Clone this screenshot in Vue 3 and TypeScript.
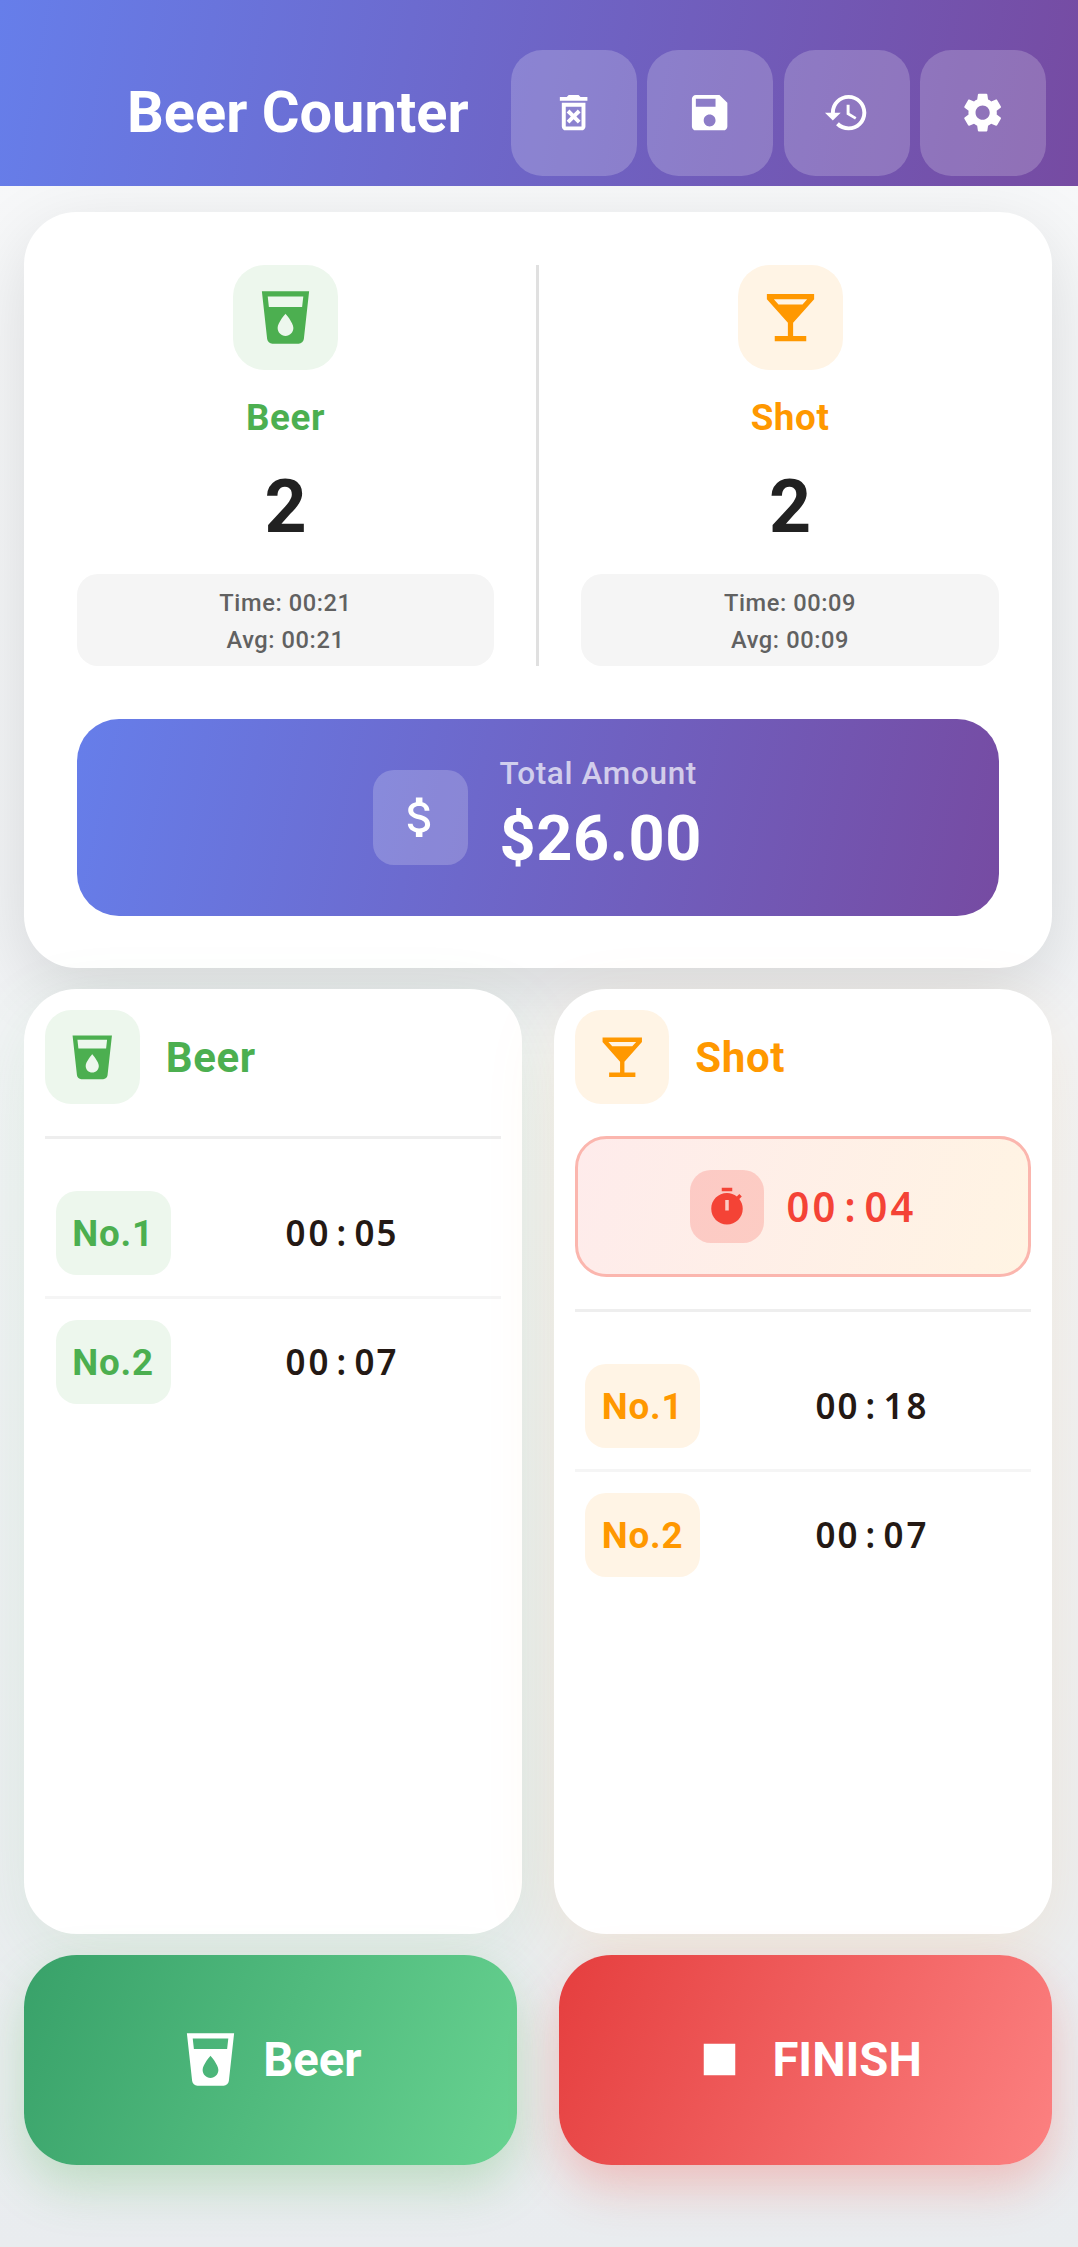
<script setup lang="ts">
interface Entry {
  no: string
  time: string
}
interface Counter {
  kind: 'beer' | 'shot'
  name: string
  count: number
  total: string
  avg: string
  running: string | null
  entries: Entry[]
}

const icons = {
  beer: 'M3 2l2.01 18.23C5.13 21.23 5.97 22 7 22h10c1.03 0 1.87-.77 1.99-1.77L21 2H3zm9 17c-1.66 0-3-1.34-3-3 0-2 3-5.4 3-5.4s3 3.4 3 5.4c0 1.66-1.34 3-3 3zm6.33-11H5.67l-.44-4h13.55l-.45 4z',
  shot: 'M21 5V3H3v2l8 9v5H6v2h12v-2h-5v-5l8-9zM7.43 7L5.66 5h12.69l-1.78 2H7.43z',
  clear: 'M14.12 10.47L12 12.59l-2.13-2.12-1.41 1.41L10.59 14l-2.12 2.12 1.41 1.41L12 15.41l2.12 2.12 1.41-1.41L13.41 14l2.12-2.12zM15.5 4l-1-1h-5l-1 1H5v2h14V4h-3.5zM6 19c0 1.1.9 2 2 2h8c1.1 0 2-.9 2-2V7H6v12zM8 9h8v10H8V9z',
  save: 'M17 3H5c-1.11 0-2 .9-2 2v14c0 1.1.89 2 2 2h14c1.1 0 2-.9 2-2V7l-4-4zm-5 16c-1.66 0-3-1.34-3-3s1.34-3 3-3 3 1.34 3 3-1.34 3-3 3zm3-10H5V5h10v4z',
  history: 'M13 3c-4.97 0-9 4.03-9 9H1l3.89 3.89.07.14L9 12H6c0-3.87 3.13-7 7-7s7 3.13 7 7-3.13 7-7 7c-1.93 0-3.68-.79-4.94-2.06l-1.42 1.42C8.27 19.99 10.51 21 13 21c4.97 0 9-4.03 9-9s-4.03-9-9-9zm-1 5v5l4.28 2.54.72-1.21-3.5-2.08V8H12z',
  settings: 'M19.14 12.94c.04-.3.06-.61.06-.94 0-.32-.02-.64-.07-.94l2.03-1.58c.18-.14.23-.41.12-.61l-1.92-3.32c-.12-.22-.37-.29-.59-.22l-2.39.96c-.5-.38-1.03-.7-1.62-.94l-.36-2.54c-.04-.24-.24-.41-.48-.41h-3.84c-.24 0-.43.17-.47.41l-.36 2.54c-.59.24-1.13.57-1.62.94l-2.39-.96c-.22-.08-.47 0-.59.22L2.74 8.87c-.12.21-.08.47.12.61l2.03 1.58c-.05.3-.09.63-.09.94s.02.64.07.94l-2.03 1.58c-.18.14-.23.41-.12.61l1.92 3.32c.12.22.37.29.59.22l2.39-.96c.5.38 1.03.7 1.62.94l.36 2.54c.05.24.24.41.48.41h3.84c.24 0 .44-.17.47-.41l.36-2.54c.59-.24 1.13-.56 1.62-.94l2.39.96c.22.08.47 0 .59-.22l1.92-3.32c.12-.22.07-.47-.12-.61l-2.01-1.58zM12 15.6c-1.98 0-3.6-1.62-3.6-3.6s1.62-3.6 3.6-3.6 3.6 1.62 3.6 3.6-1.62 3.6-3.6 3.6z',
  money: 'M11.8 10.9c-2.27-.59-3-1.2-3-2.15 0-1.09 1.01-1.85 2.7-1.85 1.78 0 2.44.85 2.5 2.1h2.21c-.07-1.72-1.12-3.3-3.21-3.81V3h-3v2.16c-1.94.42-3.5 1.68-3.5 3.61 0 2.31 1.91 3.46 4.7 4.13 2.5.6 3 1.48 3 2.41 0 .69-.49 1.79-2.7 1.79-2.06 0-2.87-.92-2.98-2.1h-2.2c.12 2.19 1.76 3.42 3.68 3.83V21h3v-2.15c1.95-.37 3.5-1.5 3.5-3.55 0-2.84-2.43-3.81-4.7-4.4z',
  timer: 'M15 1H9v2h6V1zm-4 13h2V8h-2v6zm8.03-6.61l1.42-1.42c-.43-.51-.9-.99-1.41-1.41l-1.42 1.42C16.07 4.74 14.12 4 12 4c-4.97 0-9 4.03-9 9s4.02 9 9 9 9-4.03 9-9c0-2.12-.74-4.07-1.97-5.61z',
  stop: 'M6 6h12v12H6z',
}

const actions = [
  { label: 'Clear', path: icons.clear },
  { label: 'Save', path: icons.save },
  { label: 'History', path: icons.history },
  { label: 'Settings', path: icons.settings },
]

const counters: Counter[] = [
  {
    kind: 'beer', name: 'Beer', count: 2, total: '00:21', avg: '00:21', running: null,
    entries: [{ no: 'No.1', time: '00:05' }, { no: 'No.2', time: '00:07' }],
  },
  {
    kind: 'shot', name: 'Shot', count: 2, total: '00:09', avg: '00:09', running: '00:04',
    entries: [{ no: 'No.1', time: '00:18' }, { no: 'No.2', time: '00:07' }],
  },
]
</script>

<template>
  <div class="app">
    <header class="bar">
      <h1 class="title">Beer Counter</h1>
      <nav class="actions">
        <button v-for="a in actions" :key="a.label" class="action" :aria-label="a.label">
          <svg viewBox="0 0 24 24"><path :d="a.path" fill-rule="evenodd" /></svg>
        </button>
      </nav>
    </header>

    <main class="body">
      <section class="summary">
        <div class="stats">
          <template v-for="(c, i) in counters" :key="c.kind">
            <div v-if="i > 0" class="vline"></div>
            <div class="stat" :class="c.kind">
              <div class="tile tile-lg">
                <svg viewBox="0 0 24 24"><path :d="icons[c.kind]" fill-rule="evenodd" /></svg>
              </div>
              <div class="stat-name">{{ c.name }}</div>
              <div class="stat-count">{{ c.count }}</div>
              <div class="stat-times">
                <div>Time: {{ c.total }}</div>
                <div>Avg: {{ c.avg }}</div>
              </div>
            </div>
          </template>
        </div>
        <div class="total">
          <div class="total-icon">
            <svg viewBox="0 0 24 24"><path :d="icons.money" /></svg>
          </div>
          <div>
            <div class="total-label">Total Amount</div>
            <div class="total-value">$26.00</div>
          </div>
        </div>
      </section>

      <section class="columns">
        <div v-for="c in counters" :key="c.kind" class="column" :class="c.kind">
          <div class="column-head">
            <div class="tile tile-md">
              <svg viewBox="0 0 24 24"><path :d="icons[c.kind]" fill-rule="evenodd" /></svg>
            </div>
            <div class="column-name">{{ c.name }}</div>
          </div>
          <div v-if="c.running" class="running">
            <div class="running-icon">
              <svg viewBox="0 0 24 24"><path :d="icons.timer" fill-rule="evenodd" /></svg>
            </div>
            <div class="clock clock-lg">
              <span v-for="(ch, k) in c.running" :key="k">{{ ch }}</span>
            </div>
          </div>
          <div class="hline"></div>
          <div class="entries">
            <div v-for="e in c.entries" :key="e.no" class="entry">
              <div class="chip">{{ e.no }}</div>
              <div class="clock">
                <span v-for="(ch, k) in e.time" :key="k">{{ ch }}</span>
              </div>
            </div>
          </div>
        </div>
      </section>

      <section class="buttons">
        <button class="big start">
          <svg viewBox="0 0 24 24"><path :d="icons.beer" fill-rule="evenodd" /></svg>
          <span>Beer</span>
        </button>
        <button class="big finish">
          <svg viewBox="0 0 24 24"><path :d="icons.stop" /></svg>
          <span>FINISH</span>
        </button>
      </section>
    </main>
  </div>
</template>

<style>
body {
  margin: 0;
}
</style>

<style scoped>
.app,
.app * {
  box-sizing: border-box;
}
.app {
  width: 1078px;
  height: 2247px;
  overflow: hidden;
  display: flex;
  flex-direction: column;
  font-family: Roboto, 'Liberation Sans', sans-serif;
  background: linear-gradient(180deg, #f8f9fa, #e9ecef);
}
button {
  border: 0;
  padding: 0;
  font: inherit;
  color: #fff;
}
svg {
  display: block;
  fill: currentColor;
}
.bar {
  position: relative;
  z-index: 1;
  height: 186px;
  flex: none;
  padding: 49.5px 32px 0 127px;
  display: flex;
  align-items: flex-start;
  justify-content: space-between;
  background: linear-gradient(99.8deg, #667eea, #764ba2);
}
.title {
  margin: 0;
  font-size: 57.75px;
  line-height: 124px;
  font-weight: 700;
  letter-spacing: 0;
  color: #fff;
  white-space: nowrap;
}
.actions {
  display: flex;
  gap: 10.5px;
}
.action {
  width: 126px;
  height: 126px;
  border-radius: 31.5px;
  background: rgba(255, 255, 255, 0.2);
  display: flex;
  align-items: center;
  justify-content: center;
}
.action svg {
  width: 47.25px;
  height: 47.25px;
}
.body {
  width: 1027.5px;
  margin: 26.2px 0 0 24px;
  display: flex;
  flex-direction: column;
  gap: 21px;
}
.summary {
  height: 755.5px;
  padding: 52.5px;
  border-radius: 52.5px;
  background: #fff;
  box-shadow: 0 21px 73px rgba(0, 0, 0, 0.12);
}
.stats {
  display: flex;
  height: 401.6px;
}
.vline {
  width: 2.625px;
  margin: 0 42px;
  background: #e0e0e0;
}
.stat {
  flex: 1;
  display: flex;
  flex-direction: column;
  align-items: center;
}
.beer {
  --tint: #4caf50;
  --soft: #edf7ed;
  --glow: rgba(76, 175, 80, 0.1);
}
.shot {
  --tint: #ff9800;
  --soft: #fff4e5;
  --glow: rgba(255, 152, 0, 0.1);
}
.tile {
  flex: none;
  display: flex;
  align-items: center;
  justify-content: center;
  color: var(--tint);
  background: var(--soft);
}
.tile-lg {
  width: 105px;
  height: 105px;
  border-radius: 31.5px;
}
.tile-lg svg {
  width: 63px;
  height: 63px;
}
.stat-name {
  margin-top: 21px;
  font-size: 36.75px;
  line-height: 54px;
  font-weight: 700;
  letter-spacing: 0.6px;
  color: var(--tint);
}
.stat-count {
  font-size: 73.5px;
  line-height: 86px;
  margin-top: 19.5px;
  font-weight: 700;
  color: #212121;
}
.stat-times {
  width: 100%;
  height: 92px;
  margin-top: auto;
  padding-top: 10.5px;
  border-radius: 21px;
  background: #f5f5f5;
  color: #616161;
  text-align: center;
  font-size: 23.625px;
  line-height: 37px;
  font-weight: 500;
  letter-spacing: 0.6px;
}
.total {
  height: 197.4px;
  margin-top: 52.5px;
  border-radius: 42px;
  display: flex;
  align-items: center;
  justify-content: center;
  gap: 31.5px;
  color: #fff;
  background: linear-gradient(102.1deg, #667eea, #764ba2);
}
.total-icon {
  width: 94.5px;
  height: 94.5px;
  border-radius: 21px;
  display: flex;
  align-items: center;
  justify-content: center;
  background: rgba(255, 255, 255, 0.2);
}
.total-icon svg {
  width: 52.5px;
  height: 52.5px;
}
.total-label {
  font-size: 31.5px;
  line-height: 46px;
  font-weight: 500;
  letter-spacing: 0.65px;
  color: rgba(255, 255, 255, 0.7);
}
.total-value {
  font-size: 63px;
  line-height: 84px;
  margin-bottom: 2.6px;
  font-weight: 700;
  letter-spacing: 0.6px;
}
.columns {
  display: flex;
  gap: 31.5px;
  height: 945px;
}
.column {
  flex: 1;
  padding: 21px;
  border-radius: 52.5px;
  background: #fff;
  box-shadow: 0 21px 73px var(--glow);
}
.column-head {
  display: flex;
  align-items: center;
  gap: 26.25px;
  margin-bottom: 31.5px;
}
.tile-md {
  width: 94.5px;
  height: 94.5px;
  border-radius: 26.25px;
}
.tile-md svg {
  width: 52.5px;
  height: 52.5px;
}
.column-name {
  padding-top: 2px;
  font-size: 42px;
  line-height: 60px;
  font-weight: 700;
  letter-spacing: 0.65px;
  color: var(--tint);
}
.running {
  height: 141.75px;
  margin-bottom: 31.5px;
  border: 3px solid #fbb6ae;
  border-radius: 31.5px;
  display: flex;
  align-items: center;
  justify-content: center;
  gap: 21px;
  color: #f44336;
  background: linear-gradient(107.3deg, #feebeb, #fff4e3) border-box;
}
.running-icon {
  width: 73.5px;
  height: 73.5px;
  border-radius: 21px;
  display: flex;
  align-items: center;
  justify-content: center;
  background: rgba(244, 67, 54, 0.2);
}
.running-icon svg {
  width: 42px;
  height: 42px;
}
.hline {
  height: 3px;
  background: #eee;
}
.entries {
  padding-top: 31.3px;
}
.entry {
  display: flex;
  align-items: center;
  gap: 21px;
  padding: 21px 10.5px;
}
.entry + .entry {
  border-top: 3px solid #f5f5f5;
}
.chip {
  width: 115.3px;
  height: 84px;
  border-radius: 21px;
  padding: 1px 0 0 16.75px;
  font-size: 36.75px;
  line-height: 84px;
  font-weight: 700;
  letter-spacing: 0.8px;
  white-space: nowrap;
  color: var(--tint);
  background: var(--soft);
}
.clock {
  flex: 1;
  display: flex;
  justify-content: center;
  padding-bottom: 2px;
  font-family: 'Noto Sans', 'Open Sans', sans-serif;
  font-size: 36.75px;
  line-height: 50px;
  font-weight: 600;
  color: #241914;
}
.clock span {
  width: 22.84px;
  text-align: center;
  transform: scaleX(0.95);
}
.clock-lg {
  flex: none;
  font-size: 42px;
  color: inherit;
}
.clock-lg span {
  width: 26px;
}
.buttons {
  display: flex;
  gap: 42px;
}
.big {
  flex: 1;
  height: 210px;
  border-radius: 52.5px;
  display: flex;
  align-items: center;
  justify-content: center;
  gap: 21px;
  font-size: 47.25px;
  line-height: 60px;
  font-weight: 700;
}
.big svg {
  width: 63px;
  height: 63px;
}
.start {
  background: linear-gradient(113.1deg, #38a169, #68d391);
  box-shadow: 0 21px 49px rgba(76, 175, 80, 0.28);
}
.finish {
  background: linear-gradient(113.1deg, #e53e3e, #fc8181);
  box-shadow: 0 21px 49px rgba(244, 67, 54, 0.28);
}
</style>
